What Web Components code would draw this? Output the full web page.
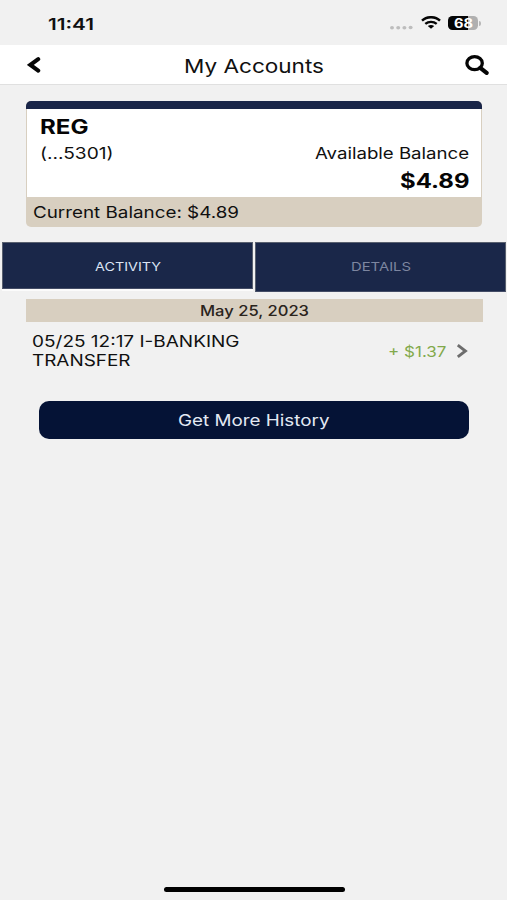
<!DOCTYPE html>
<html lang="en">
<head>
<meta charset="utf-8">
<title>My Accounts</title>
<style>
    body {
        margin: 0;
        background: #f1f1f1;
        color: #101010;
        font-family: Inter, "Liberation Sans", sans-serif;
    }
</style>
</head>
<body>
<accounts-page></accounts-page>
<script>
// Text drawn at a given width, whatever its natural width is
class WideText extends HTMLElement {
    constructor() {
        super();
        this.attachShadow({ mode: 'open' });
    }

    connectedCallback() {
        this.shadowRoot.innerHTML = `
            <style>
                :host {
                    display: block;
                    white-space: nowrap;
                    text-align: left;
                    flex: none;
                }
                span {
                    display: inline-block;
                    vertical-align: top;
                    transform-origin: 0 50%;
                }
            </style>
            <span><slot></slot></span>
        `;
        const width = Number(this.getAttribute('width'));
        const span = this.shadowRoot.querySelector('span');
        this.style.width = width + 'px';
        span.style.transform = `scaleX(${width / span.getBoundingClientRect().width})`;
    }
}

class StatusBar extends HTMLElement {
    constructor() {
        super();
        this.attachShadow({ mode: 'open' });
    }

    connectedCallback() {
        this.shadowRoot.innerHTML = `
            <style>
                :host {
                    display: flex;
                    justify-content: space-between;
                    box-sizing: border-box;
                    height: 45px;
                    padding: 14px 26px 0 47.5px;
                }
                .time {
                    font-size: 16px;
                    font-weight: 600;
                    line-height: 20px;
                }
                .icons {
                    display: flex;
                }
                .dots {
                    margin: 11px 8px 0 0;
                }
                .wifi {
                    margin: 2px 7px 0 0;
                }
                .battery {
                    display: flex;
                    align-items: center;
                    justify-content: center;
                    width: 30px;
                    height: 14px;
                    margin-top: 2px;
                    border-radius: 4.5px;
                    background: linear-gradient(90deg, #050505 68%, #b0b0b0 68%);
                    color: #fff;
                    font-size: 12.5px;
                    font-weight: 700;
                    line-height: 15px;
                }
                .cap {
                    width: 2px;
                    height: 5px;
                    margin: 7px 0 0 1px;
                    border-radius: 0 2px 2px 0;
                    background: #b8b8b8;
                }
            </style>
            <wide-text class="time" width="46">11:41</wide-text>
            <div class="icons">
                <svg class="dots" width="23" height="5" viewBox="0 0 23 5" fill="#bdbdbd">
                    <ellipse cx="2" cy="2.7" rx="2" ry="1.8"/>
                    <ellipse cx="8.2" cy="2.7" rx="2" ry="1.8"/>
                    <ellipse cx="14.4" cy="2.7" rx="2" ry="1.8"/>
                    <ellipse cx="20.6" cy="2.5" rx="2" ry="1.8"/>
                </svg>
                <svg class="wifi" width="20" height="13" viewBox="0 0 20 13" fill="none" stroke="#050505">
                    <path d="M1 4.6C6 .1 14 .1 19 4.6" stroke-width="2.5"/>
                    <path d="M4.3 7.9C7.5 5.1 12.5 5.1 15.7 7.9" stroke-width="2.3"/>
                    <path d="M6.8 10.1C8.6 8.5 11.4 8.5 13.2 10.1L10 12.8Z" fill="#050505" stroke="none"/>
                </svg>
                <div class="battery"><wide-text width="19">68</wide-text></div>
                <div class="cap"></div>
            </div>
        `;
    }
}

class NavBar extends HTMLElement {
    constructor() {
        super();
        this.attachShadow({ mode: 'open' });
    }

    connectedCallback() {
        this.shadowRoot.innerHTML = `
            <style>
                :host {
                    display: flex;
                    align-items: center;
                    justify-content: space-between;
                    box-sizing: border-box;
                    height: 40px;
                    padding: 0 18px 0 27px;
                    border-bottom: 1px solid #e0e0e0;
                    background: #fff;
                    font-size: 19px;
                    line-height: 24px;
                }
                .back {
                    margin-right: 2px;
                }
                ::slotted(*) {
                    margin-top: 4px;
                }
            </style>
            <svg class="back" width="14" height="17" viewBox="0 0 14 17" fill="none" stroke="#050505" stroke-width="4.1">
                <path d="M11.2 3.2L3.4 8.9L11.2 14.6" stroke-linecap="round"/>
            </svg>
            <slot></slot>
            <svg width="24" height="20" viewBox="0 0 24 20" fill="none" stroke="#050505">
                <ellipse cx="9.6" cy="8.2" rx="7.7" ry="6.5" stroke-width="3.3"/>
                <path d="M15.3 12.9L21.6 17.9" stroke-width="4.2" stroke-linecap="round"/>
            </svg>
        `;
    }
}

class AccountCard extends HTMLElement {
    constructor() {
        super();
        this.attachShadow({ mode: 'open' });
    }

    connectedCallback() {
        this.shadowRoot.innerHTML = `
            <style>
                :host {
                    display: block;
                    box-sizing: border-box;
                    height: 126px;
                    margin: 16px 25px 0 26px;
                    border-radius: 5px;
                    overflow: hidden;
                    background: #d8cfc0;
                    font-size: 16px;
                    line-height: 24px;
                }
                .stripe {
                    height: 8px;
                    background: #192548;
                }
                .body {
                    display: flex;
                    flex-direction: column;
                    box-sizing: border-box;
                    height: 88px;
                    margin: 0 1px;
                    padding: 6px 12px 0 12.5px;
                    background: #fff;
                }
                .row {
                    display: flex;
                    justify-content: space-between;
                    height: 26px;
                }
                .row.end {
                    padding-top: 2px;
                    justify-content: flex-end;
                }
                .strong {
                    font-size: 19.5px;
                    font-weight: 700;
                    color: #050505;
                }
                .footer {
                    padding: 3px 6.5px;
                }
            </style>
            <div class="stripe"></div>
            <div class="body">
                <div class="row"><wide-text class="strong" width="48.5">REG</wide-text></div>
                <div class="row">
                    <wide-text width="73.5">(...5301)</wide-text>
                    <wide-text width="154">Available Balance</wide-text>
                </div>
                <div class="row end"><wide-text class="strong" width="69.5">$4.89</wide-text></div>
            </div>
            <div class="footer"><wide-text width="206">Current Balance: $4.89</wide-text></div>
        `;
    }
}

class TabBar extends HTMLElement {
    constructor() {
        super();
        this.attachShadow({ mode: 'open' });
    }

    connectedCallback() {
        this.shadowRoot.innerHTML = `
            <style>
                :host {
                    display: grid;
                    grid-template-columns: 1fr 1fr;
                    gap: 2px;
                    height: 49px;
                    margin: 15px 1px 0 2px;
                    font-size: 12px;
                    line-height: 48px;
                }
                div {
                    display: flex;
                    justify-content: center;
                    box-sizing: border-box;
                    border: 1px solid #59606f;
                    border-bottom-color: #434c66;
                    background: #1a2749;
                    color: #7d86a0;
                }
                .active {
                    height: 47px;
                    box-shadow: 0 2px #fbfbfb;
                    color: #dce4f4;
                }
            </style>
            <div class="active"><wide-text width="66">ACTIVITY</wide-text></div>
            <div><wide-text width="60">DETAILS</wide-text></div>
        `;
    }
}

class ActivityList extends HTMLElement {
    constructor() {
        super();
        this.attachShadow({ mode: 'open' });
    }

    connectedCallback() {
        this.shadowRoot.innerHTML = `
            <style>
                :host {
                    display: block;
                    margin: 8px 24.5px 0 26px;
                }
                .date {
                    display: flex;
                    justify-content: center;
                    height: 23px;
                    background: #d8cfc0;
                    color: #2a241c;
                    font-size: 14.5px;
                    font-weight: 450;
                    line-height: 23px;
                }
                .item {
                    display: flex;
                    align-items: center;
                    justify-content: space-between;
                    height: 58px;
                    padding: 0 15px 0 5.5px;
                    font-size: 15.7px;
                    line-height: 19px;
                }
                .amount {
                    display: flex;
                    align-items: center;
                    gap: 9px;
                    color: #82a94b;
                    font-size: 14.5px;
                }
            </style>
            <div class="date"><wide-text width="109">May 25, 2023</wide-text></div>
            <div class="item">
                <div>
                    <wide-text width="207.5">05/25 12:17 I-BANKING</wide-text>
                    <wide-text width="98.5">TRANSFER</wide-text>
                </div>
                <div class="amount">
                    <wide-text width="58.5">+ $1.37</wide-text>
                    <svg width="12" height="14" viewBox="0 0 12 14" fill="none" stroke="#6d6d6d" stroke-width="2.9">
                        <path d="M1.8 1.2L9.4 7L1.8 12.8"/>
                    </svg>
                </div>
            </div>
        `;
    }
}

class HistoryButton extends HTMLElement {
    constructor() {
        super();
        this.attachShadow({ mode: 'open' });
    }

    connectedCallback() {
        this.shadowRoot.innerHTML = `
            <style>
                :host {
                    display: block;
                    margin: 21px 38px 0 39px;
                }
                button {
                    display: flex;
                    align-items: center;
                    justify-content: center;
                    width: 100%;
                    height: 38px;
                    padding: 0;
                    border: none;
                    border-radius: 10px;
                    background: #051336;
                    color: #e3e9f4;
                    font: inherit;
                    font-size: 16px;
                    line-height: 38px;
                    cursor: pointer;
                }
            </style>
            <button type="button"><slot></slot></button>
        `;
    }
}

class AccountsPage extends HTMLElement {
    constructor() {
        super();
        this.attachShadow({ mode: 'open' });
    }

    connectedCallback() {
        this.shadowRoot.innerHTML = `
            <style>
                :host {
                    display: flex;
                    flex-direction: column;
                    height: 900px;
                    overflow: hidden;
                }
                .home {
                    width: 181px;
                    height: 5px;
                    margin: auto auto 8px 163.5px;
                    border-radius: 3px;
                    background: #000;
                }
            </style>
            <status-bar></status-bar>
            <nav-bar><wide-text width="140">My Accounts</wide-text></nav-bar>
            <account-card></account-card>
            <tab-bar></tab-bar>
            <activity-list></activity-list>
            <history-button><wide-text width="151.5">Get More History</wide-text></history-button>
            <div class="home"></div>
        `;
    }
}

customElements.define('wide-text', WideText);
customElements.define('status-bar', StatusBar);
customElements.define('nav-bar', NavBar);
customElements.define('account-card', AccountCard);
customElements.define('tab-bar', TabBar);
customElements.define('activity-list', ActivityList);
customElements.define('history-button', HistoryButton);
customElements.define('accounts-page', AccountsPage);
</script>
</body>
</html>
